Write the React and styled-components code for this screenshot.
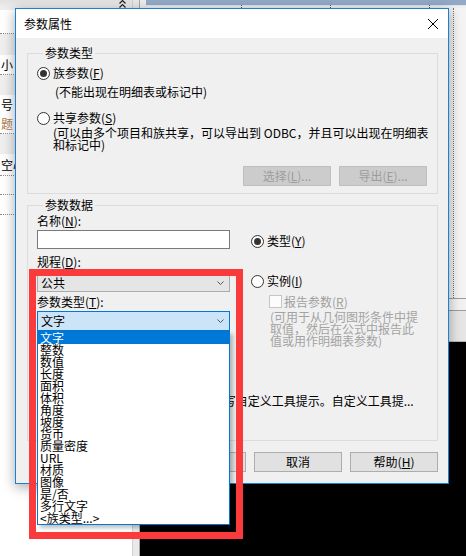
import React from 'react'
import styled, { createGlobalStyle } from 'styled-components'

const GlobalStyle = createGlobalStyle`
  html, body {
    margin: 0;
    padding: 0;
  }
  body {
    width: 466px;
    height: 556px;
    overflow: hidden;
    font-family: "Noto Sans CJK SC", "Noto Sans", sans-serif;
    font-size: 12px;
    color: #000;
  }
  * {
    box-sizing: border-box;
  }
`

const paletteRows = [
  { h: 24, line: true },
  { h: 21, group: true },
  { h: 20, line: true, text: '小' },
  { h: 20, group: true },
  { h: 19, text: '号' },
  { h: 20, line: true, text: '题', muted: true },
  { h: 20, group: true },
  { h: 22, line: true, text: '空心' },
  { h: 19, line: true },
  { h: 20, line: true },
]

const paramTypes = [
  '文字', '整数', '数值', '长度', '面积', '体积', '角度', '坡度',
  '货币', '质量密度', 'URL', '材质', '图像', '是/否', '多行文字', '<族类型...>',
]

export default function App() {
  return (
    <>
      <GlobalStyle />
      <Desktop>
        <Palette>
          <PaletteHeader>
            <svg width='7' height='8' viewBox='0 0 7 8'>
              <polyline points='0.5,3.5 3.5,0.5 6.5,3.5' fill='none' stroke='#222' strokeWidth='1.2' />
              <polyline points='0.5,7.5 3.5,4.5 6.5,7.5' fill='none' stroke='#222' strokeWidth='1.2' />
            </svg>
          </PaletteHeader>
          {paletteRows.map((r, i) => (
            <PaletteRow key={i} $h={r.h} $group={r.group} $line={r.line} $muted={r.muted}>
              {r.text}
            </PaletteRow>
          ))}
          <PaletteRest />
        </Palette>
        <Splitter />
        <ViewPane>
          <Ruler>
            <Tick $at={95} />
            <Tick $at={88} />
            <Tick $at={98} />
          </Ruler>
          <Sheet>
            <SheetEdge />
          </Sheet>
          <ViewBar />
          <Canvas />
        </ViewPane>

        <Dialog>
          <TitleBar>
            <span>参数属性</span>
            <svg width='10' height='10' viewBox='0 0 10 10'>
              <line x1='0' y1='0' x2='10' y2='10' stroke='#000' strokeWidth='1' />
              <line x1='10' y1='0' x2='0' y2='10' stroke='#000' strokeWidth='1' />
            </svg>
          </TitleBar>
          <Body>
            <Group $pad='7px 10px 7px 9px'>
              <Legend>参数类型</Legend>
              <OptionRow>
                <Radio $checked />
                <span>族参数(<u>F</u>)</span>
              </OptionRow>
              <Note $top={6} $left={18}>(不能出现在明细表或标记中)</Note>
              <OptionRow $top={13}>
                <Radio />
                <span>共享参数(<u>S</u>)</span>
              </OptionRow>
              <Note $top={2} $left={16}>
                (可以由多个项目和族共享，可以导出到 ODBC，并且可以出现在明细表<br />
                和标记中)
              </Note>
              <ButtonRow $top={15}>
                <Button disabled>选择(<u>L</u>)...</Button>
                <Button disabled>导出(<u>E</u>)...</Button>
              </ButtonRow>
            </Group>

            <Group $pad='4px 10px 33px 9px' $top={5}>
              <Legend>参数数据</Legend>
              <DataGrid>
                <Column>
                  <Note>名称(<u>N</u>):</Note>
                  <TextBox $top={3} />
                  <Note $top={7}>规程(<u>D</u>):</Note>
                  <Combo $top={5}>
                    <span>公共</span>
                    <Chevron />
                  </Combo>
                  <Note $top={4}>参数类型(<u>T</u>):</Note>
                  <Combo $top={3} $focused>
                    <span>文字</span>
                    <Chevron />
                    <ListBox>
                      {paramTypes.map((t, i) => (
                        <ListItem key={t} $selected={i === 0}>{t}</ListItem>
                      ))}
                    </ListBox>
                  </Combo>
                </Column>
                <Column>
                  <OptionRow $top={19}>
                    <Radio $checked />
                    <span>类型(<u>Y</u>)</span>
                  </OptionRow>
                  <OptionRow $top={26}>
                    <Radio />
                    <span>实例(<u>I</u>)</span>
                  </OptionRow>
                  <CheckRow>
                    <CheckBox />
                    <span>报告参数(<u>R</u>)</span>
                  </CheckRow>
                  <Note $top={3} $left={19} $muted>
                    (可用于从几何图形条件中提<br />
                    取值，然后在公式中报告此<br />
                    值或用作明细表参数)
                  </Note>
                </Column>
              </DataGrid>
              <Note $top={48}>&lt;无工具提示说明。编辑此参数以编写自定义工具提示。自定义工具提...</Note>
            </Group>

            <ButtonRow $top={11}>
              <Button>确定</Button>
              <Button>取消</Button>
              <Button>帮助(<u>H</u>)</Button>
            </ButtonRow>
          </Body>
        </Dialog>

        <Highlight />
      </Desktop>
    </>
  )
}

const Chevron = () => (
  <svg width='7' height='4' viewBox='0 0 7 4'>
    <polyline points='0.5,0.5 3.5,3.5 6.5,0.5' fill='none' stroke='#555' strokeWidth='1' />
  </svg>
)

const Desktop = styled.div`
  position: relative;
  display: flex;
  width: 466px;
  height: 556px;
  overflow: hidden;
  background: #fff;
`

const Palette = styled.div`
  width: 132px;
  flex: none;
  display: flex;
  flex-direction: column;
  background: #fff;
`

const PaletteHeader = styled.div`
  height: 10px;
  flex: none;
  display: flex;
  justify-content: flex-end;
  padding-right: 6px;
  background: linear-gradient(#e2e2e2, #f0f0f0);
`

const PaletteRow = styled.div`
  height: ${p => p.$h}px;
  flex: none;
  display: flex;
  align-items: center;
  padding-left: 1px;
  line-height: 12px;
  background: ${p => (p.$group ? '#efefef' : '#fff')};
  border-bottom: ${p => (p.$line ? '1px dotted #8c8c8c' : 'none')};
  color: ${p => (p.$muted ? '#b27b4f' : '#000')};
`

const PaletteRest = styled.div`
  flex: 1;
  background: #fff;
`

const Splitter = styled.div`
  width: 8px;
  flex: none;
  background: #e9e9e9;
  border-left: 1px solid #d2d2d2;
  border-right: 1px solid #a8a8a8;
`

const ViewPane = styled.div`
  flex: 1;
  display: flex;
  flex-direction: column;
`

const Ruler = styled.div`
  height: 8px;
  flex: none;
  display: flex;
  align-items: flex-end;
  background: linear-gradient(#93a9c6 0, #93a9c6 5px, #dfe5ee 5px, #dfe5ee 6px, #f0f0f0 6px);
  border-left: 6px solid #eeeeee;
`

const Tick = styled.span`
  width: 1px;
  height: 3px;
  margin-left: ${p => p.$at}px;
  border-left: 1px dotted #555;
`

const Sheet = styled.div`
  height: 290px;
  flex: none;
  display: flex;
  justify-content: flex-end;
  background: #f0f0f0;
`

const SheetEdge = styled.div`
  width: 13px;
  background: #f4f4f4;
  border-left: 1px dotted #777;
`

const ViewBar = styled.div`
  height: 44px;
  flex: none;
  background: #e6e6e6;
  border-top: 1px solid #9c9c9c;
  border-bottom: 1px solid #b5b5b5;
  box-shadow: inset 0 11px 0 #f2f2f2, inset 0 12px 0 #9c9c9c;
`

const Canvas = styled.div`
  flex: 1;
  background: #000;
`

const Dialog = styled.div`
  position: absolute;
  left: 15px;
  top: 8px;
  width: 434px;
  height: 476px;
  display: flex;
  flex-direction: column;
  background: #f0f0f0;
  border: 1px solid #1b7fd6;
  box-shadow: 0 3px 12px rgba(0, 0, 0, 0.35);
  z-index: 2;
`

const TitleBar = styled.div`
  height: 29px;
  flex: none;
  display: flex;
  align-items: center;
  justify-content: space-between;
  padding: 0 10px 0 8px;
  background: #fff;
  line-height: 12px;
`

const Body = styled.div`
  flex: 1;
  display: flex;
  flex-direction: column;
  padding: 9px 10px 0 11px;
  line-height: 12px;
`

const Group = styled.fieldset`
  margin: ${p => p.$top || 0}px 0 0 0;
  padding: ${p => p.$pad};
  min-width: 0;
  display: flex;
  flex-direction: column;
  border: 1px solid #dcdcdc;
`

const Legend = styled.legend`
  margin-left: 6px;
  padding: 0 2px;
  line-height: 12px;
`

const OptionRow = styled.label`
  height: 14px;
  margin-top: ${p => p.$top || 0}px;
  display: flex;
  align-items: center;
  gap: 3px;
`

const Radio = styled.span`
  width: 13px;
  height: 13px;
  flex: none;
  display: flex;
  align-items: center;
  justify-content: center;
  border-radius: 50%;
  border: 1px solid #333;
  background: #fff;

  &::after {
    content: '';
    width: 7px;
    height: 7px;
    border-radius: 50%;
    background: ${p => (p.$checked ? '#333' : 'transparent')};
  }
`

const CheckRow = styled.label`
  height: 13px;
  margin: 7px 0 0 18px;
  display: flex;
  align-items: center;
  gap: 2px;
  color: #a0a0a0;
`

const CheckBox = styled.span`
  width: 13px;
  height: 13px;
  flex: none;
  border: 1px solid #c6c6c6;
  background: #fcfcfc;
`

const Note = styled.div`
  margin: ${p => p.$top || 0}px 0 0 ${p => p.$left || 0}px;
  line-height: 12px;
  white-space: nowrap;
  color: ${p => (p.$muted ? '#a3a3a3' : '#000')};
`

const ButtonRow = styled.div`
  margin-top: ${p => p.$top || 0}px;
  display: flex;
  justify-content: flex-end;
  gap: 8px;
`

const Button = styled.button`
  width: 88px;
  height: 20px;
  padding: 0;
  font: inherit;
  line-height: 12px;
  color: #000;
  background: #e1e1e1;
  border: 1px solid #adadad;

  &:disabled {
    color: #9d9d9d;
    background: #cccccc;
    border-color: #bfbfbf;
  }
`

const DataGrid = styled.div`
  display: grid;
  grid-template-columns: 193px 1fr;
  column-gap: 21px;
  align-items: start;
`

const Column = styled.div`
  display: flex;
  flex-direction: column;
`

const TextBox = styled.div`
  height: 19px;
  margin-top: ${p => p.$top || 0}px;
  background: #fff;
  border: 1px solid #7a7a7a;
`

const Combo = styled.div`
  position: relative;
  height: ${p => (p.$focused ? 20 : 19)}px;
  margin-top: ${p => p.$top || 0}px;
  display: flex;
  align-items: center;
  justify-content: space-between;
  padding: 0 5px 0 3px;
  background: ${p => (p.$focused ? '#cce4f7' : '#e5e5e5')};
  border: 1px solid ${p => (p.$focused ? '#0078d7' : '#acacac')};
`

const ListBox = styled.ul`
  position: absolute;
  left: -1px;
  top: calc(100% + 1px);
  width: 193px;
  margin: 0;
  padding: 0;
  list-style: none;
  background: #fff;
  border: 1px solid #0078d7;
  box-shadow: 3px 3px 4px rgba(0, 0, 0, 0.25);
  z-index: 3;
`

const ListItem = styled.li`
  height: 12px;
  padding-left: 2px;
  line-height: 12px;
  white-space: nowrap;
  color: ${p => (p.$selected ? '#fff' : '#000')};
  background: ${p => (p.$selected ? '#0078d7' : 'transparent')};
`

const Highlight = styled.div`
  position: absolute;
  left: 29px;
  top: 269px;
  width: 214px;
  height: 270px;
  border: 7px solid #fb3b3b;
  z-index: 5;
  pointer-events: none;
`
